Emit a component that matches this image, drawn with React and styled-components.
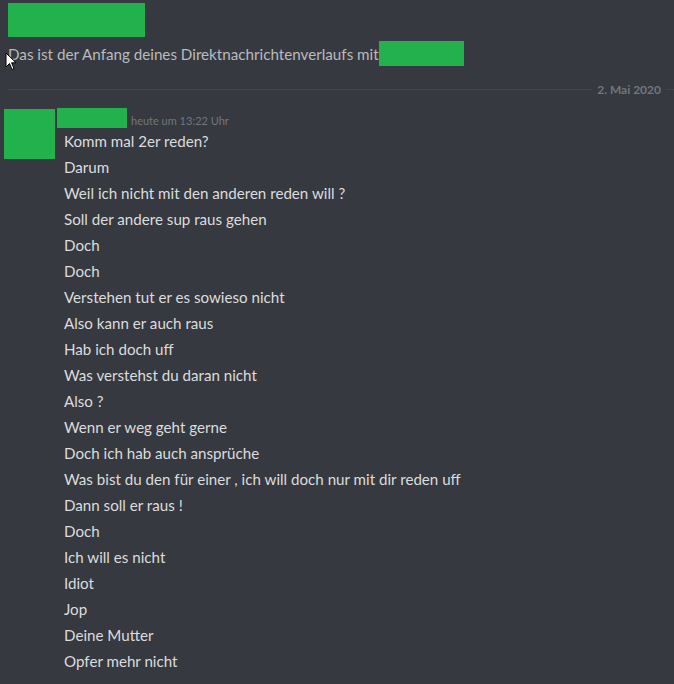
import { createGlobalStyle, styled } from "styled-components";

const Global = createGlobalStyle`
    html, body {
        margin: 0;
        padding: 0;
        background: #36393f;
    }
    body {
        font-family: Lato, "Noto Sans", "Liberation Sans", sans-serif;
        -webkit-font-smoothing: antialiased;
    }
`;

const Page = styled.div`
    position: relative;
    width: 674px;
    height: 684px;
    background: #36393f;
    overflow: hidden;
`;

const Redacted = styled.div`
    background: #22b14c;
    width: ${p => p.$w}px;
    height: ${p => p.$h}px;
    flex-shrink: 0;
`;

const Header = styled.div`
    padding: 3px 0 0 8px;
    display: flex;
    flex-direction: column;
`;

const Intro = styled.div`
    display: flex;
    align-items: flex-end;
    margin-top: 4px;
    font-size: 15.2px;
    color: #b9bbbe;
    height: 25px;
`;

const IntroText = styled.span`
    line-height: 20px;
    padding-bottom: 2px;
`;

const Divider = styled.div`
    display: flex;
    align-items: center;
    margin: 16px 0 0 8px;
    height: 14px;

    &::before, &::after {
        content: "";
        height: 1px;
        background: #42454a;
    }
    &::before { flex: 1; }
    &::after { width: 9px; }
`;

const DateLabel = styled.span`
    font-size: 12px;
    font-weight: 700;
    color: #72767d;
    padding: 0 4px 0 5px;
`;

const Group = styled.div`
    display: flex;
    padding: 13px 0 0 4px;
`;

const Body = styled.div`
    display: flex;
    flex-direction: column;
    margin-left: 2px;
`;

const Meta = styled.div`
    display: flex;
    align-items: flex-end;
    gap: 4px;
    margin-top: -1px;
`;

const Time = styled.span`
    font-size: 11px;
    color: #72767d;
    padding-bottom: 1px;
`;

const Messages = styled.div`
    display: flex;
    flex-direction: column;
    margin-left: 7px;
`;

const Line = styled.div`
    font-size: 15.15px;
    line-height: 26px;
    color: #dcddde;
    white-space: nowrap;
`;

const Cursor = styled.svg`
    position: absolute;
    left: 5px;
    top: 52px;
`;

const messages = [
    "Komm mal 2er reden?",
    "Darum",
    "Weil ich nicht mit den anderen reden will ?",
    "Soll der andere sup raus gehen",
    "Doch",
    "Doch",
    "Verstehen tut er es sowieso nicht",
    "Also kann er auch raus",
    "Hab ich doch uff",
    "Was verstehst du daran nicht",
    "Also ?",
    "Wenn er weg geht gerne",
    "Doch ich hab auch ansprüche",
    "Was bist du den für einer , ich will doch nur mit dir reden uff",
    "Dann soll er raus !",
    "Doch",
    "Ich will es nicht",
    "Idiot",
    "Jop",
    "Deine Mutter",
    "Opfer mehr nicht",
];

export default function App() {
    return (
        <Page>
            <Global />
            <Header>
                <Redacted $w={137} $h={34} />
                <Intro>
                    <IntroText>Das ist der Anfang deines Direktnachrichtenverlaufs mit</IntroText>
                    <Redacted $w={85} $h={25} />
                </Intro>
            </Header>

            <Divider>
                <DateLabel>2. Mai 2020</DateLabel>
            </Divider>

            <Group>
                <Redacted $w={51} $h={50} />
                <Body>
                    <Meta>
                        <Redacted $w={70} $h={20} />
                        <Time>heute um 13:22 Uhr</Time>
                    </Meta>
                    <Messages>
                        {messages.map((m, i) => (
                            <Line key={i}>{m}</Line>
                        ))}
                    </Messages>
                </Body>
            </Group>

            <Cursor width="12" height="19" viewBox="0 0 12 19">
                <path d="M1 1 L1 15 L4.5 11.5 L7 17.5 L9 16.6 L6.6 10.8 L11 10.8 Z" fill="#fff" stroke="#000" strokeWidth="1" strokeLinejoin="round" />
            </Cursor>
        </Page>
    );
}
